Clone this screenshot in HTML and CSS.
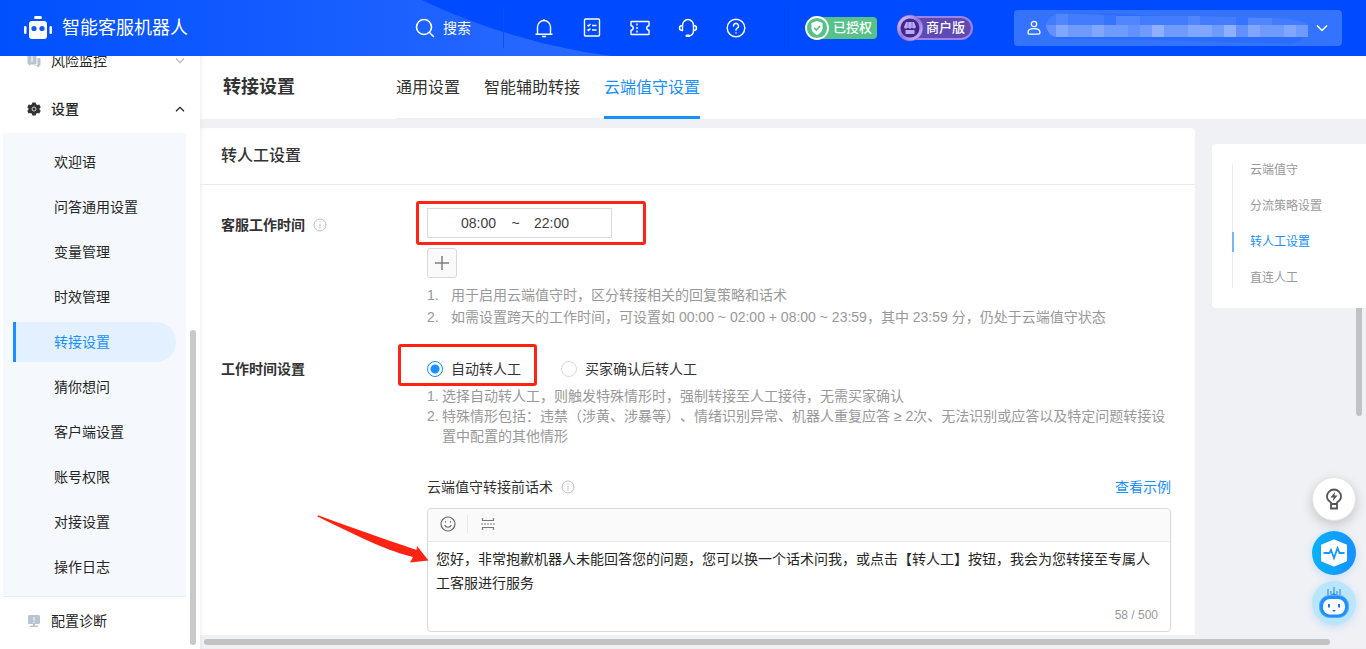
FILE: index.html
```html
<!DOCTYPE html>
<html lang="zh-CN">
<head>
<meta charset="utf-8">
<title>智能客服机器人</title>
<link rel="stylesheet" href="styles.css">
</head>
<body>
<header class="topbar">
  <svg class="topbar-glow" width="640" height="56" viewBox="0 0 640 56" aria-hidden="true">
    <defs><linearGradient id="glow" x1="0" x2="1"><stop offset="0" stop-color="#0050ff"/><stop offset="1" stop-color="#2b6aff"/></linearGradient></defs>
    <path d="M0 0H422C480 28 548 48 612 56H0Z" fill="url(#glow)"/>
  </svg>
  <div class="brand">
    <svg width="28" height="24" viewBox="0 0 28 24" aria-hidden="true">
      <rect x="10" y="0" width="8" height="3" rx="1.500" fill="#fff"/>
      <rect x="0" y="10" width="2.500" height="8" rx="1.200" fill="#fff"/>
      <rect x="25.500" y="10" width="2.500" height="8" rx="1.200" fill="#fff"/>
      <rect x="5" y="5" width="18" height="18" rx="3" fill="#fff"/>
      <circle cx="10" cy="12.500" r="2.600" fill="#1058ff"/><circle cx="18" cy="12.500" r="2.600" fill="#1058ff"/>
    </svg>
    <span class="brand-name">智能客服机器人</span>
  </div>
  <button class="search" type="button">
    <svg width="20" height="20" viewBox="0 0 20 20" fill="none" stroke="#fff" stroke-width="1.600" stroke-linecap="round"><circle cx="9" cy="9" r="7.500"/><path d="M14.500 14.500 18.500 18.500"/></svg>
    <span>搜索</span>
  </button>
  <nav class="tools" aria-label="工具">
    <button type="button" aria-label="通知"><svg width="20" height="20" viewBox="0 0 20 20" fill="none" stroke="#fff" stroke-width="1.400" stroke-linejoin="round"><path d="M1.500 16.200h17M3.500 16.200V9a6.500 6.500 0 0 1 13 0v7.200M10 2.500V1M8 18.500h4"/></svg></button>
    <button type="button" aria-label="任务"><svg width="20" height="20" viewBox="0 0 20 20" fill="none" stroke="#fff" stroke-width="1.400"><rect x="2.500" y="1" width="15" height="17" rx="1"/><path d="M5.500 7l1 1 2-2M10 7.500h4.500M5.500 11.500l1 1 2-2M10 12h4.500"/></svg></button>
    <button type="button" aria-label="优惠券"><svg width="20" height="20" viewBox="0 0 20 20" fill="none" stroke="#fff" stroke-width="1.400" stroke-linejoin="round"><path d="M1 3.500h18v4.200c-3 .3-3 4.300 0 4.600v4.200H1v-4.200c3-.3 3-4.300 0-4.600z"/><path d="M7 5.500v10" stroke-dasharray="2 1.500"/></svg></button>
    <button type="button" aria-label="客服"><svg width="20" height="20" viewBox="0 0 20 20" fill="none" stroke="#fff" stroke-width="1.400" stroke-linecap="round"><path d="M4.500 12.500V7.500a5.500 6 0 0 1 11 0v5c0 3-2 5-4.500 5.500"/><path d="M4.500 7.500C2.500 7.500 1.500 8.500 1.500 10s1 2.500 3 2.500M15.500 7.500c2 0 3 1 3 2.500s-1 2.500-3 2.500"/><path d="M8.700 17.800h2.300" stroke-width="2.400"/></svg></button>
    <button type="button" aria-label="帮助"><svg width="20" height="20" viewBox="0 0 20 20" fill="none" stroke="#fff" stroke-width="1.400" stroke-linecap="round"><circle cx="10" cy="10" r="8.800"/><path d="M7.500 8a2.500 2.500 0 1 1 3.700 2.200c-.9.500-1.200.9-1.200 2M10 14.800v.2"/></svg></button>
  </nav>
  <div class="badges">
    <div class="badge badge-auth">
      <svg width="24" height="24" viewBox="0 0 24 24" aria-hidden="true"><circle cx="12" cy="12" r="11" fill="#56c288" stroke="#fff" stroke-width="1.800"/><path d="M12 5l5.500 2v5c0 3.500-2.500 5.500-5.500 7-3-1.500-5.500-3.500-5.500-7V7z" fill="#fff"/><path d="M9.200 11.800l2.200 2.200 3.700-4" fill="none" stroke="#56c288" stroke-width="1.700"/></svg>
      <span>已授权</span>
    </div>
    <div class="badge badge-shop">
      <svg width="28" height="28" viewBox="0 0 28 28" aria-hidden="true">
        <defs><linearGradient id="ring" x1="0" y1="0" x2="1" y2="1"><stop offset="0" stop-color="#d9ccff"/><stop offset=".5" stop-color="#8f75da"/><stop offset="1" stop-color="#cbbaff"/></linearGradient></defs>
        <circle cx="14" cy="14" r="13.200" fill="#8468cf"/><circle cx="14" cy="14" r="11" fill="#40278f" stroke="url(#ring)" stroke-width="3"/>
        <path d="M10 8h8l2 5c-1 2-3 2-4 .5-1 1.500-3 1.500-4 0-1 1.500-4 1.500-4-.5z" fill="#b9a8f2"/><path d="M9.500 16h9v4h-9z" fill="#b9a8f2"/><path d="M12 8v5M16 8v5" stroke="#8b74d6"/>
      </svg>
      <span>商户版</span>
    </div>
  </div>
  <button class="account" type="button" aria-label="账号">
    <svg width="14" height="16" viewBox="0 0 14 16" fill="none" stroke="#fff" stroke-width="1.300"><circle cx="7" cy="4" r="2.700"/><path d="M1 12.500C1 10 3 8.700 7 8.700s6 1.300 6 3.800c0 1.200-.5 1.700-1.500 1.700h-9C1.500 14.200 1 13.700 1 12.500z"/></svg>
    <svg class="account-mask" width="262" height="32" viewBox="0 0 262 32">
      <path d="M14 2c60-2 100 4 140 2s70 6 94 5c18 2 14 22-4 23-60-2-140-5-228-5C-4 27-4 4 14 2z" fill="#2a6cff"/>
      <path d="M0 13C2 6 6 2 14 2c20-1 40 1 60 2h56c30 0 70 1 100 2 16 1 28 3 32 7z" fill="#437cff"/>
      <path d="M10 2h12v11H10zM70 4h24v9H70zM142 4h12v9h-12zM202 6h24v7h-24z" fill="#5086ff"/>
      <path d="M58 3h12v10H58zM190 5h12v8h-12z" fill="#3673ff"/>
      <path d="M0 13h262v12H12C6 25 1 20 0 13z" fill="#6f9aff"/>
      <path d="M10 13h12v12H10zM46 13h12v12H46zM142 13h24v12h-24zM202 13h12v12h-12zM238 13h12v12h-12z" fill="#80a6ff"/>
      <path d="M106 13h12v12h-12zM178 13h12v12h-12z" fill="#8fb0ff"/>
      <path d="M0 13h10v12C5 25 1 20 0 13zM82 13h12v12H82zM190 13h12v12h-12z" fill="#6290ff"/>
    </svg>
    <svg width="12" height="8" viewBox="0 0 12 8" fill="none" stroke="#fff" stroke-width="1.500"><path d="M1 1.500l5 5 5-5"/></svg>
  </button>
</header>

<div class="body">
  <aside class="sidebar">
    <nav class="menu" aria-label="主菜单">
      <a class="menu-row" href="#risk">
        <svg width="14" height="14" viewBox="0 0 14 14" aria-hidden="true"><path d="M2 0h6a1.500 1.500 0 0 1 1.500 1.500V9A1.500 1.500 0 0 1 8 10.500H4L2 12V10.500A1.500 1.500 0 0 1 .5 9V1.500A1.500 1.500 0 0 1 2 0z" fill="#bac3d0"/><path d="M10.500 4h1.500A1.500 1.500 0 0 1 13.500 5.500V10.500A1.500 1.500 0 0 1 12 12v2l-2-2H7.300L6 11.500h3a1.500 1.500 0 0 0 1.500-1.500z" fill="#bac3d0"/><path d="M5 2v6" stroke="#fff"/></svg>
        <span>风险监控</span>
        <svg class="chev" width="10" height="6" viewBox="0 0 10 6" fill="none" stroke="#b3b3b3" stroke-width="1.200"><path d="M1 .7l4 4 4-4"/></svg>
      </a>
      <a class="menu-row menu-row-open" href="#settings">
        <svg width="14" height="14" viewBox="0 0 14 14" aria-hidden="true"><path d="M5.300.5h3.400l.4 1.700 1.500.9 1.700-.5 1.400 2.700L12.500 6.500v1l1.200 1.200-1.400 2.700-1.700-.5-1.500.9-.4 1.700H5.300l-.4-1.700-1.500-.9-1.700.5L.3 8.700l1.200-1.200v-1L.3 5.300l1.400-2.700 1.700.5 1.500-.9z" fill="#333"/><circle cx="7" cy="7" r="2" fill="#333" stroke="#d0d0d0"/></svg>
        <span>设置</span>
        <svg class="chev" width="10" height="6" viewBox="0 0 10 6" fill="none" stroke="#222" stroke-width="1.300"><path d="M1 5.300l4-4 4 4"/></svg>
      </a>
      <div class="submenu">
        <a href="#1">欢迎语</a>
        <a href="#2">问答通用设置</a>
        <a href="#3">变量管理</a>
        <a href="#4">时效管理</a>
        <a href="#5" class="current">转接设置</a>
        <a href="#6">猜你想问</a>
        <a href="#7">客户端设置</a>
        <a href="#8">账号权限</a>
        <a href="#9">对接设置</a>
        <a href="#10">操作日志</a>
      </div>
      <a class="menu-row" href="#diagnose">
        <svg width="14" height="14" viewBox="0 0 14 14" aria-hidden="true"><path d="M2.500 1h9A1.500 1.500 0 0 1 13 2.500v6A1.500 1.500 0 0 1 11.500 10h-9A1.500 1.500 0 0 1 1 8.500v-6A1.500 1.500 0 0 1 2.500 1zM6 10h2v1.500h3V13H3v-1.500h3z" fill="#bac3d0"/><path d="M7 3v3.500M7 7.500V9" stroke="#e8ecf1" stroke-width="1.300"/></svg>
        <span>配置诊断</span>
      </a>
    </nav>
    <div class="side-thumb"></div>
  </aside>

  <main class="main">
    <div class="page-head">
      <h1>转接设置</h1>
      <nav class="tabs" aria-label="设置分类">
        <a href="#general">通用设置</a>
        <a href="#assist">智能辅助转接</a>
        <a href="#cloud" class="current">云端值守设置</a>
      </nav>
    </div>
    <div class="content">
      <section class="card">
        <h2>转人工设置</h2>
        <div class="form">
          <div class="row">
            <div class="label">客服工作时间
              <svg width="14" height="14" viewBox="0 0 14 14" fill="none" stroke="#bfbfbf"><circle cx="7" cy="7" r="6"/><path d="M7 6v4.500M7 3.500v1.200"/></svg>
            </div>
            <div class="field">
              <div class="time-line">
                <div class="time-range">
                  <input type="text" value="08:00" aria-label="开始时间"><span>~</span><input type="text" value="22:00" aria-label="结束时间">
                </div>
                <div class="mark mark-time"></div>
              </div>
              <button class="add" type="button" aria-label="添加时间段"><svg width="14" height="14" viewBox="0 0 14 14" stroke="#808080" stroke-width="1.500"><path d="M7 0v14M0 7h14"/></svg></button>
              <ol class="hints hints-wide">
                <li><span>1.</span>用于启用云端值守时，区分转接相关的回复策略和话术</li>
                <li><span>2.</span>如需设置跨天的工作时间，可设置如 00:00 ~ 02:00 + 08:00 ~ 23:59，其中 23:59 分，仍处于云端值守状态</li>
              </ol>
            </div>
          </div>
          <div class="row row-mode">
            <div class="label">工作时间设置</div>
            <div class="field">
              <div class="radios">
                <label><input type="radio" name="mode" checked>自动转人工</label>
                <label><input type="radio" name="mode">买家确认后转人工</label>
                <div class="mark mark-mode"></div>
              </div>
              <ol class="hints">
                <li><span>1.</span>选择自动转人工，则触发特殊情形时，强制转接至人工接待，无需买家确认</li>
                <li><span>2.</span>特殊情形包括：违禁（涉黄、涉暴等）、情绪识别异常、机器人重复应答 ≥ 2次、无法识别或应答以及特定问题转接设置中配置的其他情形</li>
              </ol>
              <div class="script-head">
                <label for="script">云端值守转接前话术</label>
                <svg width="14" height="14" viewBox="0 0 14 14" fill="none" stroke="#bfbfbf"><circle cx="7" cy="7" r="6"/><path d="M7 6v4.500M7 3.500v1.200"/></svg>
                <a href="#sample">查看示例</a>
              </div>
              <div class="editor">
                <div class="editor-bar">
                  <button type="button" aria-label="表情"><svg width="16" height="16" viewBox="0 0 16 16" fill="none" stroke="#666" stroke-width="1.200" stroke-linecap="round"><circle cx="8" cy="8" r="7"/><path d="M5 9.500c.7 2.300 5.300 2.300 6 0M5.500 5.500v.6M10.500 5.500v.6"/></svg></button>
                  <button type="button" aria-label="分隔"><svg width="14" height="14" viewBox="0 0 14 14" fill="none" stroke="#777" stroke-width="1.200"><path d="M1.500 1v2.500h11V1M1.500 13v-2.500h11V13"/><path d="M0 7h14" stroke-dasharray="2 1"/></svg></button>
                </div>
                <textarea id="script" rows="2">您好，非常抱歉机器人未能回答您的问题，您可以换一个话术问我，或点击【转人工】按钮，我会为您转接至专属人工客服进行服务</textarea>
                <div class="count">58 / 500</div>
                <svg class="arrow" width="114" height="50" viewBox="0 0 114 50" aria-hidden="true"><path d="M1 .3C33 12 70 25 99.500 35L100 31 111.500 45.500 93 47.500 96 42C72 36 50 26 .5 1.500z" fill="#ff2314"/></svg>
              </div>
            </div>
          </div>
        </div>
      </section>
      <nav class="anchors" aria-label="页内导航">
        <div class="anchor-list">
          <a href="#a1">云端值守</a>
          <a href="#a2">分流策略设置</a>
          <a href="#a3" class="current">转人工设置</a>
          <a href="#a4">直连人工</a>
        </div>
      </nav>
    </div>
    <div class="h-track"><div class="h-thumb"></div></div>
    <div class="v-thumb"></div>
    <div class="floats">
      <button class="float float-tip" type="button" aria-label="提示"><svg width="18" height="22" viewBox="0 0 18 22" fill="none" stroke="#555" stroke-width="1.800"><path d="M6 16v-1.500C3.500 13 2 11 2 8.500a7 7 0 0 1 14 0c0 2.500-1.500 4.500-4 6V16zM6 16v4.500h6V16"/><path d="M10 4L5.500 9.500h3L8 13l4.500-5.500h-3z" fill="#555" stroke="none"/></svg></button>
      <button class="float float-pulse" type="button" aria-label="诊断"><svg width="28" height="28" viewBox="0 0 28 28"><path d="M14 1.500l12 5v15l-12 5-12-5v-15z" fill="#fff" stroke="#fff" stroke-width="2" stroke-linejoin="round"/><path d="M3.500 14h6l1.500-3 3 8 3.500-10 2 5h5" fill="none" stroke="#1898ff" stroke-width="1.800"/></svg></button>
      <button class="float float-bot" type="button" aria-label="机器人"><svg width="32" height="32" viewBox="0 0 32 32"><path d="M10 2v6M13 4v4M16 0v9M19 4v4M22 2v6" stroke="#3293f4" stroke-width="1.200"/><path d="M12 9l4-3 4 3z" fill="#2288f2"/><rect x="1.500" y="8.500" width="29" height="22" rx="10" fill="#1e90ff" stroke="#52a9fb"/><rect x="5" y="12" width="22" height="15.500" rx="7" fill="#fff"/><path d="M11 17v3.500M21 17v3.500" stroke="#1e78e8" stroke-width="2"/><path d="M14 23h4l-2 2z" fill="#1e78e8"/></svg></button>
    </div>
  </main>
</div>
</body>
</html>
```
FILE: styles.css
```css
* { box-sizing: border-box; }
body {
  margin: 0;
  height: 100vh;
  display: flex;
  flex-direction: column;
  overflow: hidden;
  font: 14px/20px "Liberation Sans", "Noto Sans CJK SC", sans-serif;
  text-spacing-trim: space-all;
  color: #333;
  background: #fff;
}
a { color: inherit; text-decoration: none; }
button { padding: 0; border: 0; background: none; font: inherit; color: inherit; cursor: pointer; }
svg { display: block; flex: none; }
h1, h2, ol { margin: 0; padding: 0; }

/* top bar */
.topbar {
  position: relative;
  flex: none;
  display: flex;
  align-items: center;
  height: 56px;
  padding: 0 24px;
  background: #004bff;
  color: #fff;
}
.topbar-glow { position: absolute; left: 0; top: 0; }
.brand, .search, .tools, .badges, .account { position: relative; flex: none; }
.brand { display: flex; align-items: center; gap: 10px; width: 391px; }
.brand-name { font-size: 18px; line-height: 28px; }
.search {
  display: flex;
  align-items: center;
  gap: 8px;
  height: 40px;
  width: 89px;
  border-right: 1px solid #0f4ff0;
}
.tools { display: flex; align-items: center; gap: 28px; height: 40px; padding: 0 38px 0 30px; border-right: 1px solid #0046ee; }
.badges { display: flex; align-items: center; gap: 19px; height: 40px; padding: 0 0 0 20px; }
.badge { display: flex; align-items: center; font-weight: 500; font-size: 13px; line-height: 20px; }
.badge svg { position: relative; z-index: 1; }
.badge span { height: 22px; border-radius: 4px; }
.badge-auth span { margin-left: -10px; padding: 1px 5px 0 14px; background: #56c288; }
.badge-shop span {
  height: 24px;
  margin-left: -10px;
  padding: 0 8px 0 10px;
  border: 2px solid #9c84e4;
  border-radius: 0 12px 12px 0;
  background: #5f49b4;
}
.badge-shop span { padding-right: 6px; }
.account {
  display: flex;
  align-items: center;
  justify-content: space-between;
  width: 328px;
  height: 36px;
  margin-left: auto;
  padding: 0 14px 0 13px;
  border-radius: 4px;
  background: #3373ff;
}
.account-mask { margin-right: 4px; }

/* left menu */
.body { flex: 1; min-height: 0; display: flex; }
.sidebar {
  position: relative;
  z-index: 1;
  flex: none;
  display: flex;
  flex-direction: column;
  justify-content: flex-end;
  width: 200px;
  padding: 0 14px 4px 3px;
  overflow: hidden;
  background: #fff;
  color: #262626;
}
.menu-row { display: flex; align-items: center; height: 48px; padding: 0 1px 0 24px; gap: 10px; }
.menu-row-open { font-weight: 500; }
.chev { margin-left: auto; }
.submenu {
  display: flex;
  flex-direction: column;
  gap: 5px;
  padding: 9px 10px 9px;
  border-bottom: 1px solid #e4eef8;
  background: #f5f9fd;
}
.submenu a { height: 40px; padding-left: 38px; line-height: 40px; border-left: 3px solid transparent; }
.submenu .current { color: #1890ff; background: #e2f0ff; border-left-color: #1890ff; border-radius: 0 20px 20px 0; }
.side-thumb { position: absolute; right: 4px; bottom: 4px; width: 6px; height: 315px; border-radius: 3px; background: #c9c9c9; }

/* page */
.main { position: relative; flex: 1; min-width: 0; display: flex; flex-direction: column; background: #f0f1f5; box-shadow: inset 3px 0 4px -2px #e6e6e6; }
.page-head { flex: none; display: flex; align-items: stretch; height: 63px; padding-left: 23px; background: #fff; box-shadow: inset 3px 0 4px -2px #ececec; }
h1 { width: 173px; font-size: 18px; line-height: 63px; }
.tabs { display: flex; gap: 24px; font-size: 16px; line-height: 64px; box-shadow: inset 0 -1px #eef0f0; }
.tabs .current { color: #1890ff; box-shadow: inset 0 -3px #1890ff; }
.content { flex: 1; min-height: 0; display: flex; gap: 17px; padding-top: 9px; overflow: hidden; }
.card { flex: 1; min-width: 0; background: #fff; border-radius: 0 4px 0 0; box-shadow: inset 3px 0 4px -2px #ececec; }
h2 { height: 57px; padding-left: 21px; border-bottom: 1px solid #ebebeb; font-size: 16px; font-weight: 500; line-height: 56px; }
.form { padding: 23px 24px 0 21px; }
.row { display: flex; }
.row-mode { margin-top: 29px; }
.label { flex: none; display: flex; align-items: center; gap: 8px; width: 206px; height: 34px; font-weight: 700; }
.row-mode .label { height: 24px; }
.field { flex: 1; min-width: 0; }
.time-line { position: relative; }
.time-range {
  display: flex;
  align-items: center;
  justify-content: center;
  width: 185px;
  height: 30px;
  padding-right: 8px;
  border: 1px solid #d9d9d9;
}
.time-range input { width: 36px; padding: 0; border: 0; outline: 0; font: inherit; color: #404040; background: none; }
.time-range span { width: 37px; text-align: center; }
.mark { position: absolute; border: 3px solid #ff2314; border-radius: 3px; pointer-events: none; }
.mark-time { left: -11px; top: -7px; width: 230px; height: 44px; }
.mark-mode { left: -29px; top: -13px; width: 139px; height: 42px; }
.add {
  display: grid;
  place-items: center;
  width: 30px;
  height: 30px;
  margin-top: 10px;
  border: 1px solid #d9d9d9;
  border-radius: 3px;
  background: #fafafa;
}
.hints { list-style: none; color: #999; }
.hints li { display: flex; line-height: 20px; }
.hints span { flex: none; width: 15px; }
.hints-wide { margin-top: 6px; }
.hints-wide li { line-height: 22px; }
.hints-wide span { width: 24px; }
.radios { position: relative; display: flex; gap: 40px; height: 29px; line-height: 24px; }
.radios label { display: flex; align-items: center; gap: 8px; height: 24px; }
.radios input {
  appearance: none;
  width: 16px;
  height: 16px;
  margin: 0;
  border: 1px solid #d9d9d9;
  border-radius: 50%;
  background: #fff;
}
.radios input:checked { border-color: #1890ff; background: radial-gradient(circle, #1890ff 4px, #fff 5px); }
.script-head { display: flex; align-items: center; gap: 8px; margin-top: 31px; }
.script-head a { margin-left: auto; color: #1890ff; }
.editor { position: relative; margin-top: 11px; border: 1px solid #d9d9d9; border-radius: 4px; }
.editor-bar { display: flex; align-items: center; height: 33px; padding: 0 12px 2px; border-bottom: 1px solid #e8e8e8; border-radius: 4px 4px 0 0; background: #fafafa; }
.editor-bar button + button { margin-left: 11px; padding: 2px 0 2px 13px; border-left: 1px solid #e8e8e8; }
.editor textarea {
  display: block;
  width: 100%;
  padding: 5px 8px;
  border: 0;
  outline: 0;
  resize: none;
  overflow: hidden;
  font: inherit;
  line-height: 24px;
  color: #262626;
  background: none;
}
.count { padding: 5px 12px 6px; text-align: right; font-size: 12px; color: #999; }
.arrow { position: absolute; left: -111px; top: 6px; }

/* page anchors */
.anchors { align-self: flex-start; flex: none; width: 154px; margin-top: 16px; padding: 20px; border-radius: 4px 0 0 4px; background: #fff; font-size: 12px; color: #999; }
.anchor-list { display: flex; flex-direction: column; gap: 16px; height: 124px; border-left: 1px solid #ebebeb; }
.anchor-list a { margin: -4px 0 4px -1px; padding-left: 16px; border-left: 2px solid transparent; }
.anchor-list .current { color: #1890ff; border-left-color: #73b6f8; }

/* scrollbars */
.h-track { flex: none; height: 14px; padding: 4px 36px 4px 4px; }
.h-thumb { height: 6px; border-radius: 3px; background: #c1c2c4; }
.v-thumb { position: absolute; right: 4px; top: 252px; width: 6px; height: 108px; border-radius: 0 0 3px 3px; background: #c1c2c4; }

/* floating buttons */
.floats { position: absolute; right: 10px; bottom: 24px; display: flex; flex-direction: column; gap: 6px; }
.float { display: grid; place-items: center; width: 44px; height: 44px; border-radius: 50%; }
.float-tip { margin-bottom: 4px; background: #fff; border: 1px solid #e4e4e6; box-shadow: 0 4px 12px #0000002e; }
.float-pulse { background: linear-gradient(90deg, #06b2f8, #1890ff); box-shadow: 0 2px 8px #1890ff33; }
.float-bot { background: #bae5ff; box-shadow: 0 2px 8px #1890ff33; }
```
